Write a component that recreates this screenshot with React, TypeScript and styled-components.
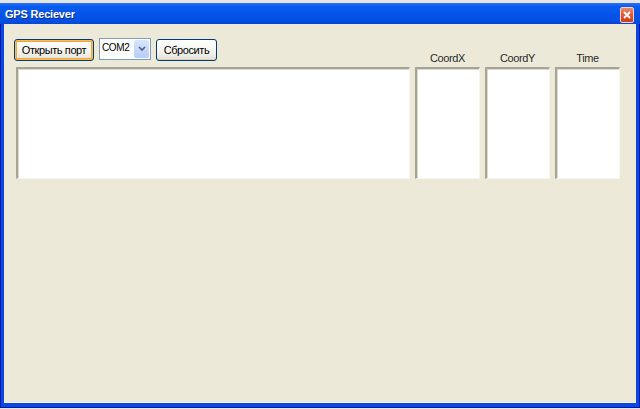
import React from 'react'
import styled, { createGlobalStyle } from 'styled-components'

const GlobalStyle = createGlobalStyle`
  html, body {
    margin: 0;
    padding: 0;
    background: #e6e6e6;
  }
  #root {
    width: 640px;
    height: 409px;
    overflow: hidden;
  }
`

const Window = styled.div`
  margin-top: 3px;
  width: 640px;
  height: 405px;
  box-sizing: border-box;
  display: flex;
  flex-direction: column;
  background: #0b47e0;
  padding: 0 4px 5px 4px;
  box-shadow: inset 1px 0 0 #0019a8, inset -1px 0 0 #0019a8, inset 0 -1px 0 #0019a8;
`

const TitleBar = styled.div`
  height: 21px;
  margin: 0 -4px;
  padding: 0 6px 0 5px;
  display: flex;
  align-items: center;
  justify-content: space-between;
  background: linear-gradient(#2a74f8 0%, #0a5cf0 15%, #0455e8 50%, #0250e2 85%, #0646d4 100%);
`

const Title = styled.span`
  font-family: 'Liberation Sans', Arial, sans-serif;
  font-size: 11px;
  font-weight: 700;
  letter-spacing: -0.2px;
  color: #fff;
  text-shadow: 1px 1px 0 #0a2c8c;
`

const CloseButton = styled.div`
  width: 12px;
  height: 14px;
  margin-top: 3px;
  border-radius: 2px;
  border: 1px solid #f4d2c6;
  background: linear-gradient(#e88a6c, #d9522c 60%, #c8411c);
  display: flex;
  align-items: center;
  justify-content: center;
`

const Client = styled.div`
  flex: 1;
  background: #ece9d8;
  padding: 14px 14px 0 12px;
  box-shadow: inset 0 -1px 0 #f6f2e2;
`

const Grid = styled.div`
  display: grid;
  grid-template-columns: 394px 65px 65px 65px;
  grid-template-rows: 29px 112px;
  column-gap: 5px;
`

const Toolbar = styled.div`
  display: flex;
  align-items: flex-start;
  gap: 5px;
  margin-left: -2px;
`

const Button = styled.button<{ $focused?: boolean; $w: number }>`
  width: ${p => p.$w}px;
  height: 22px;
  margin-top: 1px;
  padding: 0;
  box-sizing: border-box;
  border: 1px solid #003c74;
  border-radius: 3px;
  background: linear-gradient(#ffffff 0%, #f4f3ee 60%, #e3e1d6 100%);
  box-shadow: ${p =>
    p.$focused
      ? 'inset 0 0 0 1px #f7bd57, inset 0 0 0 2px #f2a33a'
      : 'inset 0 -1px 0 #d6d0c5, inset 0 1px 0 #fff'};
  font-family: 'Liberation Sans', Arial, sans-serif;
  font-size: 11px;
  letter-spacing: -0.4px;
  color: #000;
`

const Combo = styled.div`
  width: 52px;
  height: 22px;
  box-sizing: border-box;
  border: 1px solid #7f9db9;
  background: #fff;
  display: flex;
  align-items: stretch;
`

const ComboText = styled.span`
  flex: 1;
  min-width: 0;
  overflow: hidden;
  padding: 3px 0 0 2px;
  font-family: 'Liberation Sans', Arial, sans-serif;
  font-size: 10px;
  letter-spacing: -0.4px;
  color: #000;
`

const DropButton = styled.div`
  width: 15px;
  margin: 1px;
  border-radius: 2px;
  background: linear-gradient(#d8e5fd, #b7cdf8);
  display: flex;
  align-items: center;
  justify-content: center;
`

const Label = styled.div`
  align-self: end;
  padding-bottom: 3px;
  text-align: center;
  font-family: 'Liberation Sans', Arial, sans-serif;
  font-size: 11px;
  letter-spacing: -0.4px;
  color: #2a2a2a;
`

const TextBox = styled.div`
  background: #fff;
  border-top: 2px solid #a7a493;
  border-left: 2px solid #a7a493;
  border-right: 1px solid #f7f6f0;
  border-bottom: 1px solid #f7f6f0;
  box-shadow: inset 1px 1px 0 #dcdace;
`

export default function App() {
  return (
    <>
      <GlobalStyle />
      <Window>
        <TitleBar>
          <Title>GPS Reciever</Title>
          <CloseButton>
            <svg width="8" height="8" viewBox="0 0 8 8">
              <path d="M1 1 L7 7 M7 1 L1 7" stroke="#fff" strokeWidth="1.8" />
            </svg>
          </CloseButton>
        </TitleBar>
        <Client>
          <Grid>
            <Toolbar>
              <Button $focused $w={80}>Открыть порт</Button>
              <Combo>
                <ComboText>COM2</ComboText>
                <DropButton>
                  <svg width="8" height="6" viewBox="0 0 8 6">
                    <path d="M1 1 L4 4 L7 1" stroke="#4d6185" strokeWidth="1.6" fill="none" />
                  </svg>
                </DropButton>
              </Combo>
              <Button $w={61}>Сбросить</Button>
            </Toolbar>
            <Label>CoordX</Label>
            <Label>CoordY</Label>
            <Label>Time</Label>
            <TextBox />
            <TextBox />
            <TextBox />
            <TextBox />
          </Grid>
        </Client>
      </Window>
    </>
  )
}
